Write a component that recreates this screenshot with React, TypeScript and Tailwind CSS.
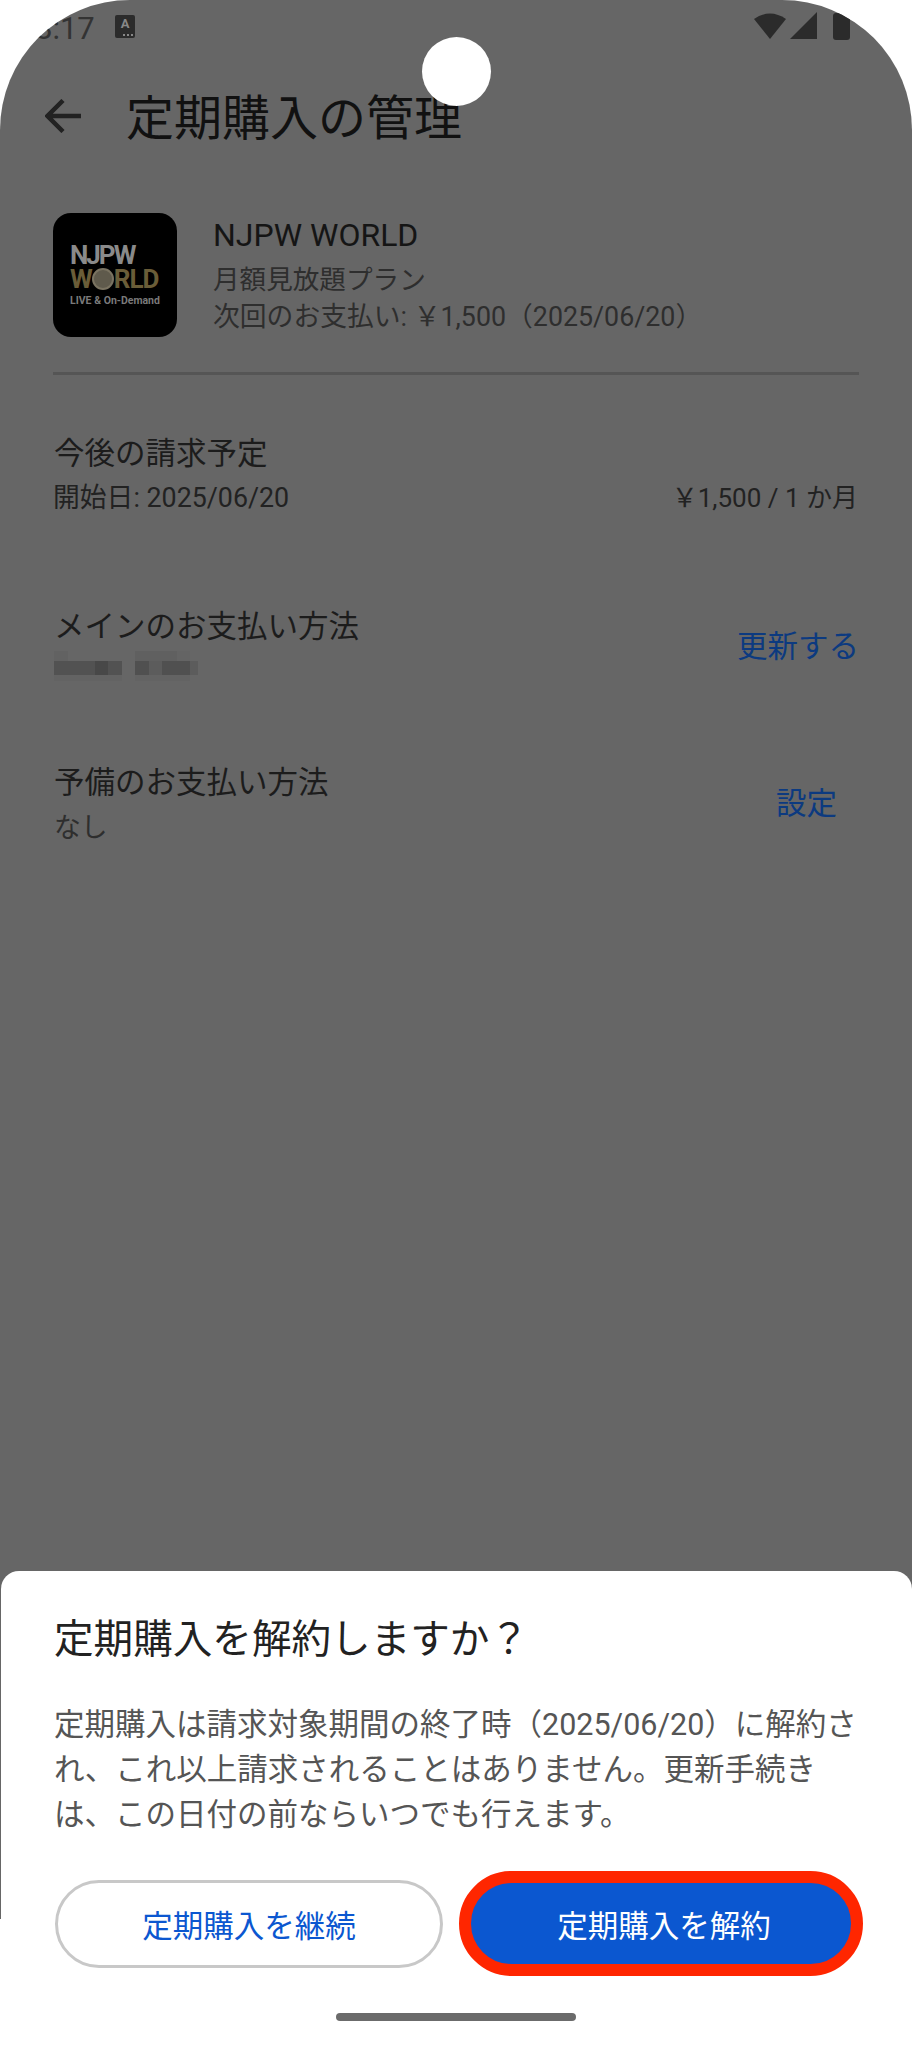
import React from "react";

const font = { fontFamily: '"Roboto","Noto Sans CJK JP",sans-serif' };

function Logo() {
  return (
    <div className="flex h-[124px] w-[124px] shrink-0 flex-col items-start justify-center rounded-[18px] bg-black pl-[17px] font-bold">
      <div className="text-[26px] leading-[23px] text-[#8a8a8a] [letter-spacing:-2px]">NJPW</div>
      <div className="flex items-center text-[26px] leading-[25px] text-[#6a5d38] [letter-spacing:-1px]">
        W
        <span className="h-[22px] w-[22px] shrink-0 rounded-full border-2 border-[#7a7361] bg-[#5f5a4c]" />
        RLD
      </div>
      <div className="mt-[2px] whitespace-nowrap text-[10.5px] leading-[13px] text-[#7a7a7a]">LIVE &amp; On-Demand</div>
    </div>
  );
}

export default function App() {
  return (
    <div style={font} className="relative h-[2048px] w-[912px] overflow-hidden bg-white">
      <div className="h-[1919px] overflow-hidden rounded-t-[130px] bg-[#666666]">
        {/* status bar */}
        <div className="flex h-[56px] items-start pt-[12px] pl-[35px] pr-[62px]">
          <span className="w-[60px] whitespace-nowrap text-[31px] leading-[34px] text-[#333333]">8:17</span>
          <span className="relative ml-[20px] mt-[3px] flex h-[23px] w-[20px] flex-col items-center rounded-[2px] bg-[#2b2b2b] text-[13px] font-bold leading-[17px] text-[#888888]">
            A
            <svg className="absolute bottom-[2px] right-[2px]" width="10" height="2" viewBox="0 0 10 2" fill="#888888">
              <rect x="0" width="2" height="2" />
              <rect x="4" width="2" height="2" />
              <rect x="8" width="2" height="2" />
            </svg>
          </span>
          <div className="ml-auto flex items-start">
            <svg width="96" height="28" viewBox="0 0 96 28">
              <path d="M0 7 Q16 -4 32 7 L16 27 Z" fill="#2b2b2b" />
              <path d="M36 27 L63 0 V27 Z" fill="#2b2b2b" />
              <path d="M79 4 Q79 1 82 1 H96 V25 Q96 28 93 28 H82 Q79 28 79 25 Z" fill="#2b2b2b" />
            </svg>
          </div>
        </div>
        {/* header */}
        <div className="mt-[33px] flex h-[60px] items-center pl-[45px]">
          <svg className="-mt-[6px]" width="36" height="34" viewBox="0 0 36 34" fill="none" stroke="#222222" strokeWidth="4.5">
            <path d="M36 17 H3 M18 1.5 L2.5 17 L18 32.5" />
          </svg>
          <h1 className="ml-[45px] text-[48px] font-normal leading-[60px] text-[#111111]">定期購入の管理</h1>
        </div>
        {/* product */}
        <div className="mt-[64px] flex pl-[53px]">
          <Logo />
          <div className="ml-[36px] pt-[2px]">
            <div className="text-[32px] font-normal leading-[40px] text-[#151515]">NJPW WORLD</div>
            <div className="mt-[5px] text-[26.6px] leading-[40px] text-[#2e2e2e]">月額見放題プラン</div>
            <div className="mt-[-3px] text-[26.8px] leading-[40px] text-[#2e2e2e]">次回のお支払い: ￥1,500（2025/06/20）</div>
          </div>
        </div>
        <div className="mx-[53px] mt-[35px] h-[3px] bg-[#555555]" />
        {/* rows */}
        <div className="mx-[54px] mt-[59px]">
          <div className="text-[30.5px] leading-[40px] text-[#1c1c1c]">今後の請求予定</div>
          <div className="mt-[6px] flex items-center justify-between text-[26.8px] leading-[36px] text-[#222222]">
            <span className="-ml-[1px]">開始日: 2025/06/20</span>
            <span className="text-[26px]">￥1,500 / 1 か月</span>
          </div>
        </div>
        <div className="ml-[54px] mr-[53px] mt-[91px] flex items-center justify-between">
          <div>
            <div className="text-[30.5px] leading-[40px] text-[#1c1c1c]">メインのお支払い方法</div>
            <svg className="mt-[4px] block" width="145" height="30" viewBox="0 0 145 30">
              <rect x="0" y="0" width="14" height="10" fill="#626262" />
              <rect x="81" y="0" width="42" height="10" fill="#606060" />
              <rect x="123" y="0" width="13" height="10" fill="#646464" />
              <rect x="0" y="10" width="68" height="14" fill="#525252" />
              <rect x="41" y="10" width="13" height="14" fill="#484848" />
              <rect x="81" y="10" width="14" height="14" fill="#505050" />
              <rect x="95" y="10" width="13" height="14" fill="#5c5c5c" />
              <rect x="108" y="10" width="28" height="14" fill="#505050" />
              <rect x="136" y="10" width="8" height="14" fill="#5c5c5c" />
              <rect x="0" y="24" width="68" height="6" fill="#636363" />
              <rect x="81" y="24" width="55" height="6" fill="#636363" />
            </svg>
          </div>
          <span className="pt-[6px] text-[30.5px] leading-[40px] text-[#0c3a80]">更新する</span>
        </div>
        <div className="ml-[54px] mr-[75px] mt-[82px] flex items-center justify-between">
          <div>
            <div className="text-[30.5px] leading-[40px] text-[#1c1c1c]">予備のお支払い方法</div>
            <div className="mt-[7px] text-[26.8px] leading-[36px] text-[#2e2e2e]">なし</div>
          </div>
          <span className="pb-[2px] text-[30.5px] leading-[40px] text-[#0c3a80]">設定</span>
        </div>
      </div>

      {/* camera */}
      <div className="absolute left-[422px] top-[37px] h-[69px] w-[69px] rounded-full bg-white" />

      {/* bottom sheet */}
      <div className="absolute bottom-0 left-[1px] right-0 top-[1571px] rounded-t-[18px] bg-white">
        <h2 className="ml-[53px] mt-[44px] text-[39.6px] font-normal leading-[50px] text-[#222222]">
          定期購入を解約しますか？
        </h2>
        <p className="ml-[53px] mr-[50px] mt-[37px] text-[30.5px] leading-[45px] text-[#555555]">
          定期購入は請求対象期間の終了時（2025/06/20）に解約され、これ以上請求されることはありません。更新手続きは、この日付の前ならいつでも行えます。
        </p>
        <div className="ml-[54px] mt-[34px] flex items-center">
          <button className="h-[88px] w-[388px] rounded-full border-[3px] border-[#c8c8c8] bg-white pt-[7px] text-[30.5px] text-[#0b57d0]">
            定期購入を継続
          </button>
          <button className="ml-[16px] h-[105px] w-[404px] rounded-full border-[12px] border-[#ff2600] bg-[#0b57d0] pl-[6px] pt-[7px] text-[30.5px] text-white">
            定期購入を解約
          </button>
        </div>
        <div className="mx-auto mt-[37px] h-[8px] w-[240px] -translate-x-[1px] rounded-full bg-[#6b6b6b]" />
      </div>
    </div>
  );
}
